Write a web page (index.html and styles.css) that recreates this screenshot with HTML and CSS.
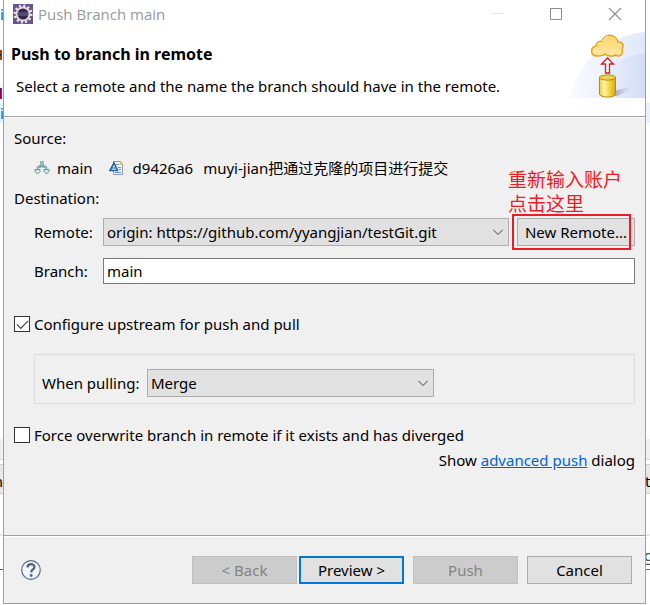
FILE: index.html
```html
<!DOCTYPE html>
<html lang="en">
<head>
<meta charset="utf-8">
<title>Push Branch main</title>
<link rel="stylesheet" href="styles.css">
</head>
<body>
<div class="backdrop" aria-hidden="true">
  <div class="shade shade-line"></div>
  <div class="shade shade-tabs"></div>
  <div class="shade shade-bar"></div>
  <div class="shade shade-rule"></div>
  <span class="code code-a">i</span>
  <span class="code code-b">H</span>
  <span class="code code-c">d</span>
  <span class="code code-d">i</span>
  <span class="code code-e">n</span>
  <span class="code code-f">t</span>
  <span class="code code-g">g</span>
</div>
<main class="dialog">
  <div class="titlebar">
    <svg class="app-icon" viewBox="0 0 20 20" width="20" height="20">
      <rect width="20" height="20" fill="#66538f"/>
      <circle cx="10" cy="10" r="8" fill="none" stroke="#ece9e4" stroke-width="3" stroke-dasharray="2 2.19"/>
      <circle cx="10" cy="10" r="6.5" fill="#30264f" stroke="#dedbd8" stroke-width="2"/>
      <path d="M5 9h10M5 11h10" stroke="#7668a0" stroke-width="1"/>
    </svg>
    <span class="window-title">Push Branch main</span>
    <svg class="window-controls" viewBox="0 0 130 14" width="130" height="14" fill="none">
      <path d="M0 6.500h12" stroke="#e6e6e6"/>
      <path d="M58.500 1.500h11v11h-11z" stroke="#8c8c8c"/>
      <path d="M117 1l12 12M129 1l-12 12" stroke="#8c8c8c" stroke-width="1.100"/>
    </svg>
  </div>
  <header class="banner">
    <div class="banner-text">
      <h1>Push to branch in remote</h1>
      <p>Select a remote and the name the branch should have in the remote.</p>
    </div>
    <svg class="banner-art" viewBox="0 0 75 66" width="75" height="66">
      <defs>
        <linearGradient id="sky"><stop offset="0" stop-color="#f8faff"/><stop offset="1" stop-color="#e0e8f8"/></linearGradient>
        <linearGradient id="hill"><stop offset="0" stop-color="#e9effb" stop-opacity="0"/><stop offset="1" stop-color="#d2ddf5"/></linearGradient>
        <linearGradient id="cloud" x2="0" y2="1"><stop offset="0" stop-color="#ffd66f"/><stop offset="1" stop-color="#ffe6a0"/></linearGradient>
        <linearGradient id="gold"><stop offset="0" stop-color="#eccb3e"/><stop offset=".3" stop-color="#fff4a0"/><stop offset=".65" stop-color="#efd23f"/><stop offset="1" stop-color="#dda917"/></linearGradient>
        <linearGradient id="shadow"><stop offset="0" stop-color="#9ba3b4"/><stop offset="1" stop-color="#c9d4eb" stop-opacity="0"/></linearGradient>
      </defs>
      <path d="M0 66C10 25 38 5 75 0V66z" fill="url(#sky)"/>
      <path d="M15 66C26 43 48 25 75 21V66z" fill="url(#hill)"/>
      <path d="M43 64V59L64 54Q58 60 47 64z" fill="url(#shadow)"/>
      <path d="M27 24C20 24 20 15 26 14C26 10 30 8 32 10C33 1 46 1 48 10C54 10 54 15 52 17C54 24 48 25 46 23C42 25 37 24 35 22C33 24 30 24 27 24z" fill="url(#cloud)" stroke="#e3a11b" stroke-width="1.400"/>
      <path d="M30 12C33 12 33 5 38 4" fill="none" stroke="#fff1bd"/>
      <path d="M35.500 41V32H31.500L37.500 26L43.500 32H39.500V41z" fill="#fff3f1" stroke="#cc2326" stroke-width="1.300"/>
      <path d="M29.500 45V62C29.500 66 45.500 66 45.500 62V45z" fill="url(#gold)" stroke="#b88914"/>
      <ellipse cx="37.500" cy="45.500" rx="8" ry="2.600" fill="#f0d04e" stroke="#b88914"/>
    </svg>
  </header>
  <form class="content">
    <p class="line">Source:</p>
    <div class="line source">
      <svg viewBox="0 0 16 14" width="16" height="14" fill="none" stroke="#5f969c">
        <path d="M7 0v4L3.500 6v3M9 0v4l3.500 2v3M5 7l3-2 3 2" stroke-width="1.200"/>
        <path d="M1 8.500h5v2L3.500 13 1 10.500zM10 8.500h5v2L12.500 13 10 10.500z" fill="#cfe9ea"/>
      </svg>
      <span class="branch-name">main</span>
      <svg viewBox="0 0 16 16" width="16" height="16">
        <path d="M4.500 1.500h7l2 3v10h-9z" fill="#f6f8ff" stroke="#8a9ac2"/>
        <path d="M10.500 1v4h4z" fill="#d9c07a"/>
        <path d="M9 7.500h3M10 9.500h2M6 12.500h6M7 4.500h3" stroke="#7089be"/>
        <path d="M1 10.500L5 3l3.500 7.500z" fill="#e6f5f8" stroke="#1b659b" stroke-width="1.600"/>
        <path d="M3 8h4" stroke="#1b659b"/>
      </svg>
      <span class="commit">d9426a6</span>
      <span class="message">muyi-jian把通过克隆的项目进行提交</span>
    </div>
    <p class="line">Destination:</p>
    <div class="fields">
      <label for="remote">Remote:</label>
      <div class="remote-row">
        <div class="combo">
          <select id="remote"><option>origin: https://github.com/yyangjian/testGit.git</option></select>
          <svg viewBox="0 0 10 6" width="10" height="6"><path d="M0 .500l5 5 5-5" fill="none" stroke="#444"/></svg>
        </div>
        <div class="new-remote">
          <button type="button">New Remote...</button>
          <div class="note" lang="zh">重新输入账户<br>点击这里</div>
          <div class="note-frame"></div>
        </div>
      </div>
      <label for="branch">Branch:</label>
      <input id="branch" class="textbox" type="text" value="main">
    </div>
    <label class="check"><input type="checkbox" checked>Configure upstream for push and pull</label>
    <div class="group">
      <label for="pull">When pulling:</label>
      <div class="combo">
        <select id="pull"><option>Merge</option></select>
        <svg viewBox="0 0 10 6" width="10" height="6"><path d="M0 .500l5 5 5-5" fill="none" stroke="#444"/></svg>
      </div>
    </div>
    <label class="check"><input type="checkbox">Force overwrite branch in remote if it exists and has diverged</label>
    <p class="advanced">Show <a href="#advanced">advanced push</a> dialog</p>
  </form>
  <footer class="buttons">
    <button type="button" class="help" aria-label="Help">
      <svg viewBox="0 0 20 20" width="20" height="20" fill="none">
        <circle cx="10" cy="10" r="9.300" fill="#f5f6f9" stroke="#596985" stroke-width="1.200"/>
        <path d="M6.500 7.500C6.500 3 13.500 3 13.500 7C13.500 9.500 10.200 9.500 10.200 12.500" stroke="#4f6286" stroke-width="2.200"/>
        <circle cx="10.200" cy="15.500" r="1.400" fill="#4f6286"/>
      </svg>
    </button>
    <div class="pair">
      <button type="button" disabled>&lt; Back</button>
      <button type="button" class="primary">Preview &gt;</button>
    </div>
    <button type="button" disabled>Push</button>
    <button type="button">Cancel</button>
  </footer>
</main>
</body>
</html>
```
FILE: styles.css
```css
* { box-sizing: border-box; }

body {
  margin: 0;
  position: relative;
  min-height: 100vh;
  overflow: hidden;
  background: #fff;
  color: #000;
  font: 15px/20px "Noto Sans", "Noto Sans CJK SC", sans-serif;
}

h1, p { margin: 0; }
button, input, select { font: inherit; color: inherit; }
svg { display: block; flex: none; }

/* Editor window showing behind the dialog */
.backdrop { position: absolute; inset: 0; overflow: hidden; }
.shade { position: absolute; left: 0; right: 0; }
.shade-line { top: 103px; height: 20px; background: #e8f2fe; }
.shade-tabs { top: 439px; height: 21px; background: #f0f0f0; border-bottom: 1px solid #d8d8d8; }
.shade-bar { top: 464px; height: 30px; background: #e8e8e8; border: solid #d0d0d0; border-width: 1px 0; }
.shade-rule { top: 534px; height: 36px; border-top: 2px solid #e8e8e8; border-bottom: 1px solid #666; }
.code { position: absolute; }
.code-a { top: 4px; left: 0; color: #0066cc; }
.code-b { top: 44px; right: 647px; }
.code-c { top: 83px; right: 647px; color: #7f0055; font-weight: bold; }
.code-d { top: 103px; left: 0; color: #0066cc; }
.code-e { top: 471px; right: 647px; }
.code-f { top: 471px; left: 645px; }
.code-g { top: 545px; left: 644px; color: #444; }

.dialog {
  position: relative;
  margin: 0 4px 0 3px;
  border: 1px solid #a0a0a0;
  border-top: 0;
  background: #f0f0f0;
}

.titlebar {
  display: flex;
  align-items: center;
  height: 28px;
  padding: 0 23px 0 9px;
  background: #fff;
}
.window-title { margin-left: 5px; color: #999; font-family: "Open Sans", sans-serif; }
.window-controls { margin-left: auto; }

.banner {
  display: flex;
  justify-content: space-between;
  height: 89px;
  padding-top: 4px;
  background: #fff;
  border-bottom: 1px solid #a0a0a0;
}
.banner-text { padding: 12px 0 0 7px; }
.banner h1 { font-size: 16px; line-height: 20px; }
.banner p { margin: 12px 0 0 5px; }

.content {
  padding: 10px 10px 65px;
  border-top: 1px solid #fff;
  border-bottom: 1px solid #a0a0a0;
}
.line { height: 20px; margin-bottom: 10px; }
.source { display: flex; align-items: center; padding-left: 20px; }
.source .branch-name { margin: 0 16px 0 7px; }
.source .commit { margin: 0 10px 0 8px; }

.fields {
  display: grid;
  grid-template-columns: 69px 1fr;
  row-gap: 12px;
  align-items: center;
  margin-left: 20px;
}
.remote-row { display: flex; gap: 8px; }
.remote-row .combo { flex: 1; }

.combo { position: relative; }
.combo svg { position: absolute; right: 6px; top: 11px; pointer-events: none; }
.combo select {
  display: block;
  width: 100%;
  height: 28px;
  padding: 0 24px 0 3px;
  appearance: none;
  background: #e1e1e1;
  border: 1px solid #adadad;
  border-radius: 0;
}

.textbox {
  width: 100%;
  height: 26px;
  padding: 0 3px;
  background: #fff;
  border: 1px solid #7a7a7a;
}

button {
  height: 28px;
  padding: 0;
  background: #e1e1e1;
  border: 1px solid #adadad;
  white-space: nowrap;
}
button:disabled { background: #ccc; border-color: #bfbfbf; color: #838383; }

.new-remote { position: relative; width: 118px; }
.new-remote button { width: 100%; }
.note {
  position: absolute;
  left: -9px;
  bottom: 30px;
  color: #ed1c24;
  font-size: 19px;
  line-height: 24px;
  white-space: nowrap;
}
.note-frame {
  position: absolute;
  inset: -4px 4px -4px -5px;
  border: 2px solid #ed1c24;
}

.check { display: flex; align-items: center; gap: 4px; height: 20px; margin-top: 30px; }
.check input {
  appearance: none;
  flex: none;
  width: 16px;
  height: 16px;
  margin: 0;
  background: #fff;
  border: 1px solid #333;
  display: grid;
  place-items: center;
}
.check input:checked::after {
  content: "";
  width: 10px;
  height: 5px;
  border: solid #333;
  border-width: 0 0 1px 1px;
  transform: translateY(-1px) rotate(-45deg);
}

.group {
  display: grid;
  grid-template-columns: 100px 287px;
  column-gap: 5px;
  align-items: center;
  height: 50px;
  margin: 20px 0 -9px 20px;
  padding: 8px 7px 0;
  border: 1px solid #dcdcdc;
}

.advanced { margin-top: 5px; text-align: right; }
.advanced a { color: #0066cc; }

.buttons {
  display: flex;
  align-items: center;
  gap: 9px;
  padding: 19px 13px 19px 17px;
  border-top: 1px solid #fff;
}
.buttons button { width: 105px; }
.pair { display: flex; gap: 2px; }
.buttons .primary { border: 2px solid #0078d7; }
.buttons .help { width: 20px; height: 20px; margin-right: auto; background: none; border: 0; }
```
